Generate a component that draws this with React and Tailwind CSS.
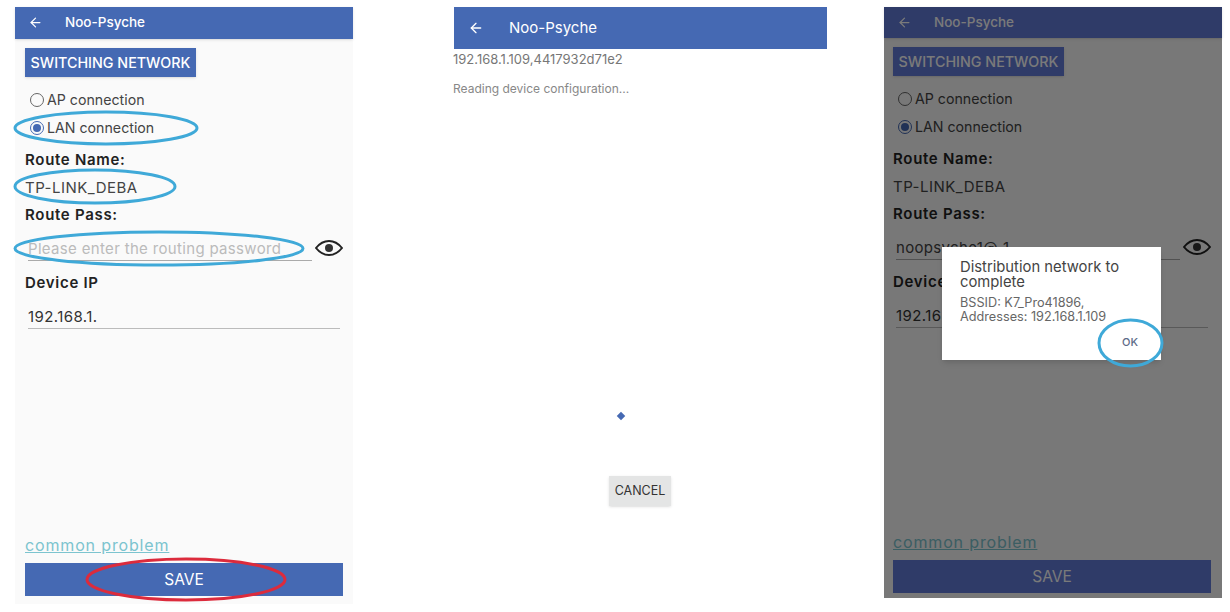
import { ArrowLeft } from "lucide-react";

const FONT = "font-['Inter','Noto_Sans',sans-serif]";
const LABEL = "ml-[10px] text-[15px] font-semibold tracking-[0.7px] text-[#222] leading-[24px]";

const Ring = ({ className, color = "#3fa9d8" }) => (
  <svg
    className={`absolute overflow-visible ${className}`}
    viewBox="0 0 100 100"
    preserveAspectRatio="none"
    fill="none"
  >
    <ellipse
      cx="50"
      cy="50"
      rx="50"
      ry="50"
      stroke={color}
      strokeWidth="3"
      vectorEffect="non-scaling-stroke"
    />
  </svg>
);

const Eye = () => (
  <svg width="28" height="16" viewBox="0 0 28 16" fill="none">
    <path
      d="M1 8C5 3 9 1 14 1s9 2 13 7c-4 5-8 7-13 7S5 13 1 8Z"
      stroke="#222"
      strokeWidth="2"
    />
    <circle cx="14" cy="8" r="4" fill="#333" />
  </svg>
);

const Radio = ({ checked }) => (
  <div
    className={`w-[14px] h-[14px] rounded-full border flex items-center justify-center ${
      checked ? "border-[#4569b3]" : "border-[#666]"
    }`}
  >
    {checked && <div className="w-2 h-2 rounded-full bg-[#4569b3]" />}
  </div>
);

const FormPhone = ({ password, placeholder, height, barClass, headerClass, bodyClass, saveClass }) => (
  <div className={`w-[338px] ${height} bg-[#fafafa] flex flex-col shrink-0`}>
    <div className={`${headerClass} ${barClass} flex items-center pl-[13px] pb-px text-white shadow-sm shrink-0`}>
      <ArrowLeft size={15} strokeWidth={2} />
      <span className="ml-[22px] text-[13.5px] font-medium">Noo-Psyche</span>
    </div>

    <div className={`flex-1 flex flex-col ${bodyClass}`}>
      <button className={`mt-[9px] ml-[10px] w-[171px] h-[29px] ${barClass} text-white text-[14.3px] font-medium flex items-center justify-center shadow-sm`}>
        SWITCHING NETWORK
      </button>

      <div className="mt-[9px] ml-[15px] flex items-center gap-[3px] h-[28px] text-[14.2px] text-[#444]">
        <Radio />
        <span>AP connection</span>
      </div>
      <div className="ml-[15px] flex items-center gap-[3px] h-[28px] text-[14.2px] text-[#444]">
        <Radio checked />
        <span>LAN connection</span>
      </div>

      <div className={`mt-[6px] ${LABEL}`}>Route Name:</div>
      <div className="ml-[10px] mt-[4px] text-[15px] tracking-[0.5px] text-[#444] leading-[24px]">
        TP-LINK_DEBA
      </div>
      <div className={`mt-[3px] ${LABEL}`}>Route Pass:</div>

      <div className="mt-[4px] ml-[13px] flex items-center">
        <div
          className={`w-[284px] h-[30px] pt-[8px] border-b border-[#aaa] flex items-center text-[15px] tracking-[0.33px] ${
            password ? "text-[#444]" : "text-[#bbb]"
          }`}
        >
          {password || placeholder}
        </div>
        <div className="ml-[3px] pt-[4px]">
          <Eye />
        </div>
      </div>

      <div className={`mt-[10px] ${LABEL}`}>Device IP</div>
      <div className="mt-[4px] mx-[13px] h-[30px] pt-[7px] border-b border-[#bbb] flex items-center text-[15px] tracking-[0.4px] text-[#333]">
        192.168.1.
      </div>

      <a className="mt-auto ml-[10px] text-[16px] tracking-[0.85px] text-[#7cc4cf] underline leading-[20px]">
        common problem
      </a>
      <button className={`mt-[8px] mx-[10px] ${saveClass} h-[33px] pt-px ${barClass} text-white text-[15.5px] flex items-center justify-center shrink-0`}>
        SAVE
      </button>
    </div>
  </div>
);

const App = () => {
  return (
    <div
      className={`w-[1230px] h-[612px] bg-white overflow-hidden flex items-start pt-[7px] pl-[15px] ${FONT}`}
    >
      {/* first screen: form with the callouts */}
      <div className="relative shrink-0">
        <FormPhone
          height="h-[597px]"
          headerClass="h-8"
          barClass="bg-[#4569b3]"
          bodyClass=""
          saveClass="mb-[8px]"
          placeholder="Please enter the routing password"
        />
        <Ring className="left-0 top-[105px] w-[182px] h-[32px]" />
        <Ring className="left-0 top-[163px] w-[160px] h-[33px]" />
        <Ring className="left-0 top-[225px] w-[288px] h-[33px]" />
        <Ring
          className="left-[72px] top-[552px] w-[198px] h-[41px]"
          color="#dc2b3c"
        />
      </div>

      {/* second screen: reading config */}
      <div className="ml-[101px] w-[373px] h-[597px] flex flex-col shrink-0">
        <div className="h-[42px] bg-[#4569b3] flex items-center pl-[14px] text-white">
          <ArrowLeft size={16} strokeWidth={2} />
          <span className="ml-[25px] text-[15px]">Noo-Psyche</span>
        </div>
        <div className="mt-[2px] -ml-px text-[13px] leading-[16px] text-[#777]">
          192.168.1.109,4417932d71e2
        </div>
        <div className="mt-[14px] -ml-px text-[12px] leading-[16px] text-[#888]">
          Reading device configuration...
        </div>
        <div className="mt-[316px] ml-[164px] w-[6px] h-[6px] rotate-45 bg-[#4569b3]" />
        <button className="mt-[57px] ml-[155px] w-[62px] h-[30px] bg-[#e4e5e5] text-[12.5px] text-[#333] flex items-center justify-center shadow-sm">
          CANCEL
        </button>
      </div>

      {/* third screen: dialog over dimmed form */}
      <div className="relative ml-[57px] shrink-0">
        <FormPhone
          height="h-[591px]"
          headerClass="h-[31px]"
          barClass="bg-[#627bd9]"
          bodyClass="-ml-px mr-px"
          saveClass="mb-[5px]"
          password="noopsyche1@_1"
        />
        <div className="absolute inset-0 bg-black/[0.52]" />
        <div className="absolute left-[58px] top-[240px] w-[219px] h-[113px] bg-white shadow-md pt-[13px] pl-[18px]">
          <div className="text-[14.8px] leading-[15px] text-[#444]">
            Distribution network to complete
          </div>
          <div className="mt-[6px] text-[12.7px] leading-[14px] text-[#666]">
            BSSID: K7_Pro41896,
            <br />
            Addresses: 192.168.1.109
          </div>
          <div className="absolute right-[23px] bottom-[10px] text-[11px] font-medium text-[#5d6b88]">
            OK
          </div>
        </div>
        <Ring className="left-[215px] top-[313px] w-[63px] h-[46px]" />
      </div>
    </div>
  );
};

export default App;
